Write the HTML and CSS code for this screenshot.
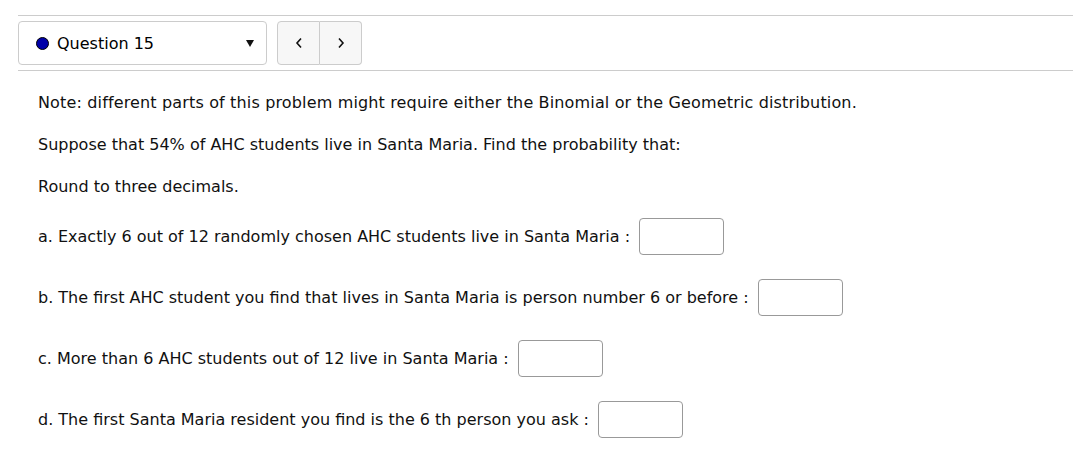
FILE: index.html
```html
<!DOCTYPE html>
<html>
<head>
<meta charset="utf-8">
<link rel="stylesheet" href="styles.css">
</head>
<body>
<div class="header">
  <div class="qselect">
    <span class="dot"></span>
    <span class="qlabel">Question 15</span>
    <span class="caret"></span>
  </div>
  <div class="navbtns">
    <button class="nav"><svg width="8" height="12" viewBox="0 0 8 12"><path d="M6 1.5 L2 6 L6 10.5" fill="none" stroke="#111" stroke-width="1.6"/></svg></button>
    <button class="nav"><svg width="8" height="12" viewBox="0 0 8 12"><path d="M2 1.5 L6 6 L2 10.5" fill="none" stroke="#111" stroke-width="1.6"/></svg></button>
  </div>
</div>
<div class="content">
  <p class="line note">Note: different parts of this problem might require either the Binomial or the Geometric distribution.</p>
  <p class="line">Suppose that 54% of AHC students live in Santa Maria. Find the probability that:</p>
  <p class="line">Round to three decimals.</p>
  <div class="parts">
    <div class="part">a. Exactly 6 out of 12 randomly chosen AHC students live in Santa Maria : <span class="ans"></span></div>
    <div class="part">b. The first AHC student you find that lives in Santa Maria is person number 6 or before : <span class="ans"></span></div>
    <div class="part">c. More than 6 AHC students out of 12 live in Santa Maria : <span class="ans"></span></div>
    <div class="part">d. The first Santa Maria resident you find is the 6 th person you ask : <span class="ans"></span></div>
  </div>
</div>
</body>
</html>
```
FILE: styles.css
```css
html, body {
  margin: 0;
  padding: 0;
  background: #fff;
}
body {
  font-family: "DejaVu Sans", sans-serif;
  font-size: 16px;
  color: #111;
}
.header {
  margin: 15px 0 0 18px;
  border-top: 1px solid #ccc;
  border-bottom: 1px solid #ccc;
  padding: 5px 0;
  display: flex;
  gap: 10px;
  height: 44px;
  box-sizing: content-box;
}
.qselect {
  width: 247px;
  height: 42px;
  border: 1px solid #ccc;
  border-radius: 4px;
  display: flex;
  align-items: center;
}
.dot {
  width: 11px;
  height: 11px;
  border-radius: 50%;
  background: #0000a8;
  border: 1px solid #000;
  margin-left: 17px;
}
.qlabel {
  margin-left: 8px;
  font-size: 16px;
  color: #000;
}
.caret {
  margin-left: auto;
  margin-right: 12px;
  width: 0;
  height: 0;
  border-left: 4px solid transparent;
  border-right: 4px solid transparent;
  border-top: 7px solid #111;
}
.navbtns {
  display: flex;
  height: 44px;
}
.nav {
  width: 43px;
  height: 44px;
  background: #f7f7f7;
  border: 1px solid #ccc;
  padding: 0;
  margin: 0;
  display: flex;
  align-items: center;
  justify-content: center;
}
.nav:first-child {
  border-radius: 4px 0 0 4px;
}
.nav:last-child {
  border-left: none;
  border-radius: 0 4px 4px 0;
  width: 42px;
}
.content {
  padding-left: 38px;
  padding-top: 21px;
}
.line {
  margin: 0 0 20px 0;
  line-height: 22px;
}
.note {
  letter-spacing: 0.15px;
}
.parts {
  display: flex;
  flex-direction: column;
  gap: 24px;
  margin-top: 19px;
}
.part {
  display: flex;
  align-items: center;
  height: 37px;
  white-space: pre;
}
.ans {
  display: inline-block;
  width: 83px;
  height: 35px;
  border: 1px solid #999;
  border-radius: 4px;
  margin-left: 4px;
}
```
